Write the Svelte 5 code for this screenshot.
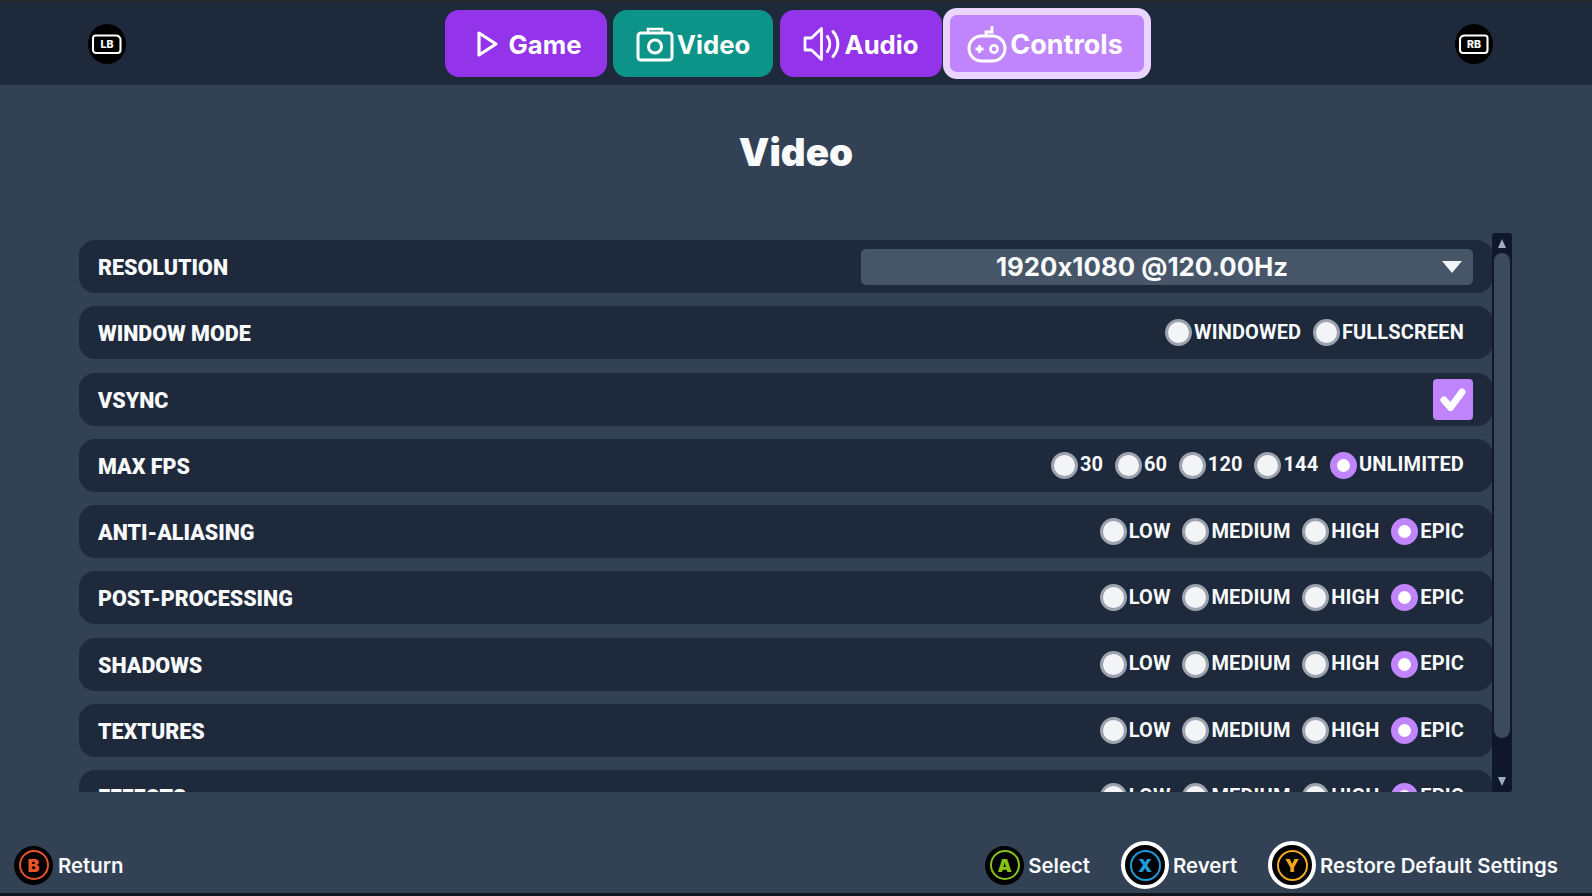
<script>
  const q = ['LOW', 'MEDIUM', 'HIGH', 'EPIC'];
  const rows = [
    { label: 'WINDOW MODE', opts: ['WINDOWED', 'FULLSCREEN'], sel: -1 },
    { label: 'VSYNC', check: true },
    { label: 'MAX FPS', opts: ['30', '60', '120', '144', 'UNLIMITED'], sel: 4 },
    { label: 'ANTI-ALIASING', opts: q, sel: 3 },
    { label: 'POST-PROCESSING', opts: q, sel: 3 },
    { label: 'SHADOWS', opts: q, sel: 3 },
    { label: 'TEXTURES', opts: q, sel: 3 },
    { label: 'EFFECTS', opts: q, sel: 3 }
  ];
</script>

<div class="page">
  <header class="head">
    <div class="bumper">
      <svg viewBox="0 0 38 40" width="38" height="40"><ellipse cx="19" cy="20" rx="19" ry="20" fill="#000"/><path d="M5 14a2.500 2.500 0 0 1 2.500-2.500h20a5 5 0 0 1 5 3.500v11a3 3 0 0 1-3 3H8a3 3 0 0 1-3-3z" fill="none" stroke="#fff" stroke-width="2.100"/><text x="19" y="24.200" text-anchor="middle" class="bt">LB</text></svg>
    </div>
    <nav class="tabs">
      <div class="tab purple game">
        <svg viewBox="0 0 24 30" width="24" height="30"><path d="M4 4 21 15 4 26z" fill="none" stroke="#fff" stroke-width="3.200" stroke-linejoin="round"/></svg>
        <span>Game</span>
      </div>
      <div class="tab teal video">
        <svg viewBox="0 0 38 36" width="38" height="36"><path d="M12 7V3h14v4" fill="none" stroke="#fff" stroke-width="2.600"/><rect x="2" y="7" width="34" height="27" rx="3" fill="none" stroke="#fff" stroke-width="3"/><circle cx="19" cy="20.500" r="6.500" fill="none" stroke="#fff" stroke-width="3"/></svg>
        <span>Video</span>
      </div>
      <div class="tab purple audio">
        <svg viewBox="0 0 38 36" width="38" height="36"><path d="M2 12h6.500L18.500 2.500v31l-10-9.500H2z" fill="none" stroke="#fff" stroke-width="2.800" stroke-linejoin="round"/><path d="M24.500 10.500c3 4.500 3 10.500 0 15M30 5.500c6.500 7.500 6.500 17.500 0 25" fill="none" stroke="#fff" stroke-width="3" stroke-linecap="round"/></svg>
        <span>Audio</span>
      </div>
      <div class="tab active controls">
        <svg viewBox="0 0 40 38" width="40" height="38"><path d="M25 1v6h-6v4" fill="none" stroke="#fff" stroke-width="2.800"/><rect x="2" y="11" width="36" height="25" rx="12.500" fill="none" stroke="#fff" stroke-width="3"/><path d="M8.500 24h8M12.500 20v8" stroke="#fff" stroke-width="2.800"/><circle cx="27" cy="24" r="3.600" fill="none" stroke="#fff" stroke-width="2.600"/></svg>
        <span>Controls</span>
      </div>
    </nav>
    <div class="bumper">
      <svg viewBox="0 0 38 40" width="38" height="40"><ellipse cx="19" cy="20" rx="19" ry="20" fill="#000"/><path d="M5 15a5 5 0 0 1 5-3.500h20a2.500 2.500 0 0 1 2.500 2.500v12a3 3 0 0 1-3 3H8a3 3 0 0 1-3-3z" fill="none" stroke="#fff" stroke-width="2.100"/><text x="19" y="24.200" text-anchor="middle" class="bt">RB</text></svg>
    </div>
  </header>

  <h1 class="title">Video</h1>

  <section class="settings">
    <div class="list">
      <div class="row">
        <span class="label">RESOLUTION</span>
        <div class="select"><span class="value">1920x1080 @120.00Hz</span><i class="arrow"></i></div>
      </div>
      {#each rows as r}
        <div class="row">
          <span class="label">{r.label}</span>
          {#if r.check}
            <div class="check">
              <svg viewBox="0 0 40 41" width="40" height="41"><path d="M11 21l6.500 7.500L29 13" fill="none" stroke="#fff" stroke-width="7" stroke-linejoin="round" stroke-linecap="round"/></svg>
            </div>
          {:else}
            <div class="options">
              {#each r.opts as o, i}
                <div class="opt"><i class="radio" class:on={i === r.sel}></i><span>{o}</span></div>
              {/each}
            </div>
          {/if}
        </div>
      {/each}
    </div>
    <div class="scroll">
      <i class="up"></i>
      <div class="thumb"></div>
      <i class="down"></i>
    </div>
  </section>

  <footer class="foot">
    <div class="hint first">
      <span class="pad" style="--c:#e9552b"><b>B</b></span><span>Return</span>
    </div>
    <div class="right">
      <div class="hint">
        <span class="pad" style="--c:#86c21a"><b>A</b></span><span>Select</span>
      </div>
      <div class="hint">
        <span class="pad ring" style="--c:#1e9bdc"><b>X</b></span><span>Revert</span>
      </div>
      <div class="hint">
        <span class="pad ring" style="--c:#eeaa1c"><b>Y</b></span><span>Restore Default Settings</span>
      </div>
    </div>
  </footer>
</div>

<style>
  :global(body) { margin: 0; background: #334155; }
  .page {
    width: 1592px; height: 896px; overflow: hidden;
    display: flex; flex-direction: column;
    background: #334155; color: #f8fafc;
    font-family: Inter, "Liberation Sans", sans-serif;
    font-feature-settings: "calt" 0;
    border-bottom: 3px solid #10141c; box-sizing: border-box;
  }
  .head {
    height: 85px; flex: none; box-sizing: border-box;
    border-top: 2px solid #26282c;
    background: #1e293b;
    display: flex; align-items: center; justify-content: space-between;
    padding: 0 99px 0 88px;
  }
  .bumper { width: 38px; height: 40px; }
  .bumper svg { display: block; }
  .bt { font: 800 10.500px Inter, sans-serif; fill: #fff; }
  .tabs { display: flex; align-items: center; margin-left: 15px; }
  .tab {
    box-sizing: border-box; height: 67px; border-radius: 14px;
    display: flex; align-items: center; justify-content: center;
    font-size: 25.700px; font-weight: 700; color: #fff; margin-right: 6px;
  }
  .tab span { position: relative; top: 1px; }
  .purple { background: #9333ea; }
  .teal { background: #0d9488; }
  .active { background: #c084fc; border: 7px solid #e9d5ff; height: 71px; margin-right: 0; margin-left: -5px; }
  .game { width: 162px; gap: 10px; padding-left: 4px; }
  .video { width: 160px; gap: 3px; margin-right: 7px; }
  .audio { width: 162px; gap: 3px; }
  .controls { width: 208px; gap: 3px; font-size: 27px; padding-right: 4px; }

  .title {
    margin: 0; flex: none; height: 149px; padding-top: 45px; box-sizing: border-box;
    font-size: 38.500px; font-weight: 900; line-height: 44px; text-align: center;
  }
  .settings {
    flex: none; height: 558px; display: flex;
    padding-left: 79px;
  }
  .list {
    width: 1414px; height: 558px; overflow: hidden; box-sizing: border-box;
    padding-top: 6px; display: flex; flex-direction: column; gap: 13.300px;
  }
  .row {
    flex: none; height: 53px; box-sizing: border-box;
    background: #1e293b; border-radius: 16px;
    display: flex; align-items: center; justify-content: space-between;
    padding: 0 20px 0 19px;
  }
  .label { font-family: Roboto, Inter, sans-serif; font-size: 21.500px; font-weight: 900; position: relative; top: 1px; }
  .select {
    width: 612px; height: 36px; border-radius: 5px; background: #475569;
    position: relative; display: flex; align-items: center; justify-content: center;
    box-sizing: border-box; padding-right: 50px;
    font-size: 25.800px; font-weight: 650;
  }
  .arrow {
    position: absolute; right: 11px; top: 12px; width: 0; height: 0;
    border: 10px solid transparent; border-top: 12px solid #f1f5f9; border-bottom: 0;
  }
  .check { width: 40px; height: 41px; background: #c084fc; border-radius: 4px; }
  .check svg { display: block; }
  .options { display: flex; align-items: center; gap: 11.700px; padding-right: 9px; }
  .opt {
    display: flex; align-items: center; gap: 2px; font-size: 20px; font-weight: 700;
    font-family: Roboto, Inter, sans-serif; letter-spacing: 0.150px;
  }
  .opt span { position: relative; top: -1px; }
  .radio {
    width: 27px; height: 27px; border-radius: 50%; box-sizing: border-box;
    background: #f3f4f6; border: 3.500px solid #9ca3af; display: block;
  }
  .radio.on { background: #fff; border: 7.500px solid #c084fc; }

  .scroll {
    width: 20px; height: 559px; margin-top: -1px; margin-left: -1px; background: #0f172a; border-radius: 3px;
    position: relative;
  }
  .thumb {
    position: absolute; left: 2px; right: 2px; top: 20px; height: 485px;
    background: #3b4a5f; border-radius: 8px;
  }
  .up, .down {
    position: absolute; left: 5.500px; width: 0; height: 0;
    border-left: 4.500px solid transparent; border-right: 4.500px solid transparent;
  }
  .up { top: 6px; border-bottom: 9px solid #a0aec4; }
  .down { bottom: 6px; border-top: 9px solid #a0aec4; }

  .foot {
    flex: 1; display: flex; justify-content: space-between; align-items: flex-start;
    padding: 49px 34px 0 14px;
  }
  .right { display: flex; gap: 31px; }
  .hint { display: flex; align-items: center; gap: 4px; height: 48px; font-size: 20.400px; font-weight: 600; }
  .hint.first { gap: 5px; }
  .pad {
    width: 39px; height: 39px; border-radius: 50%; background: #000; box-sizing: border-box;
    display: flex; align-items: center; justify-content: center; position: relative;
    color: var(--c);
  }
  .pad::before {
    content: ""; position: absolute; inset: 4.500px; border: 2.500px solid var(--c); border-radius: 50%;
  }
  .pad b { font-size: 18px; font-weight: 900; }
  .pad.ring { width: 48px; height: 48px; border: 4.500px solid #fff; }
  .pad.ring::before { inset: 4.500px; }
</style>
